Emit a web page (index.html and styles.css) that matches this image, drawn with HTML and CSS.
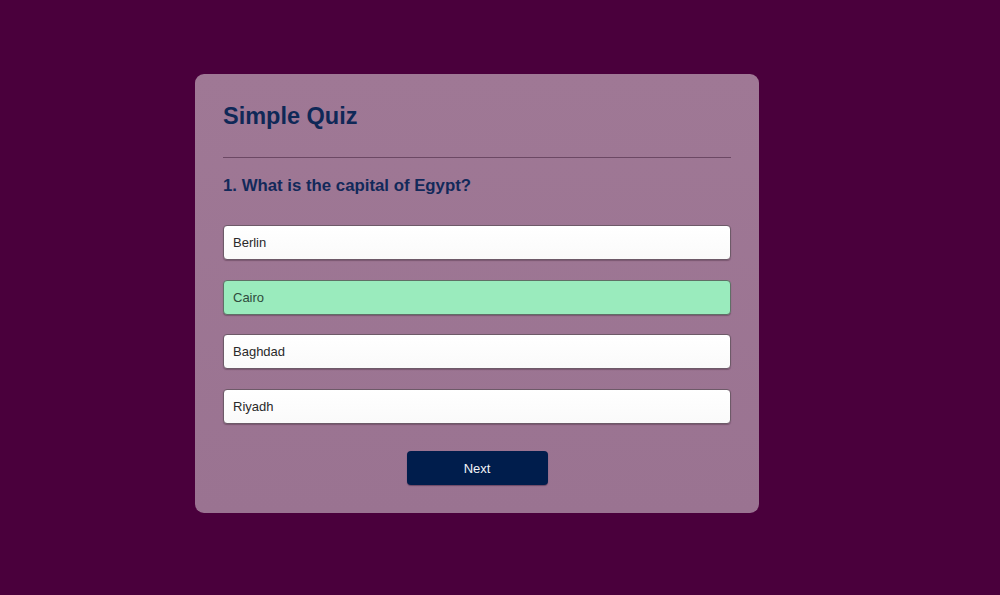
FILE: index.html
```html
<!DOCTYPE html>
<html lang="en">
<head>
<meta charset="utf-8">
<title>Simple Quiz</title>
<link rel="stylesheet" href="styles.css">
</head>
<body>
  <div class="app">
    <h1 class="title">Simple Quiz</h1>
    <div class="quiz">
      <h2 class="question">1. What is the capital of Egypt?</h2>
      <div class="answers">
        <button class="btn">Berlin</button>
        <button class="btn correct">Cairo</button>
        <button class="btn">Baghdad</button>
        <button class="btn">Riyadh</button>
      </div>
      <button class="next">Next</button>
    </div>
  </div>
</body>
</html>
```
FILE: styles.css
```css
* { box-sizing: border-box; }
html, body { height: 100%; }
body {
  margin: 0;
  padding: 74px 0 0 195px;
  background: #4a003c;
  font-family: "Liberation Sans", Arial, sans-serif;
}
.app {
  width: 564px;
  height: 439px;
  background: linear-gradient(#9f7895, #9a7391);
  border-radius: 9px;
  padding: 28px;
}
.title {
  margin: 0;
  font-size: 23.5px;
  font-weight: 700;
  color: #0f2857;
  line-height: 28px;
  padding-bottom: 27px;
  border-bottom: 1px solid #6c4864;
}
.question {
  margin: 18px 0 0;
  font-size: 16.8px;
  line-height: 20px;
  font-weight: 700;
  color: #12295a;
}
.answers {
  display: flex;
  flex-direction: column;
  gap: 19.5px;
  margin-top: 29px;
}
.btn {
  display: block;
  width: 100%;
  height: 35px;
  text-align: left;
  padding: 0 9px;
  font-family: "Liberation Sans", Arial, sans-serif;
  font-size: 13px;
  color: #2a2a2a;
  background: linear-gradient(#ffffff, #fafafa);
  border: 1px solid #6d5a68;
  border-radius: 4px;
  box-shadow: 0 1px 1px rgba(60, 30, 50, 0.35);
}
.btn.correct {
  background: #9aebbd;
  color: #2f4a3c;
  border-color: #5f6f66;
}
.next {
  display: block;
  width: 141px;
  height: 34px;
  margin: 27.5px auto 0;
  background: #001d4c;
  color: #f2f4f8;
  border: none;
  border-radius: 4px;
  font-family: "Liberation Sans", Arial, sans-serif;
  font-size: 13px;
  box-shadow: 0 1px 1px rgba(40, 10, 40, 0.4);
}
```
